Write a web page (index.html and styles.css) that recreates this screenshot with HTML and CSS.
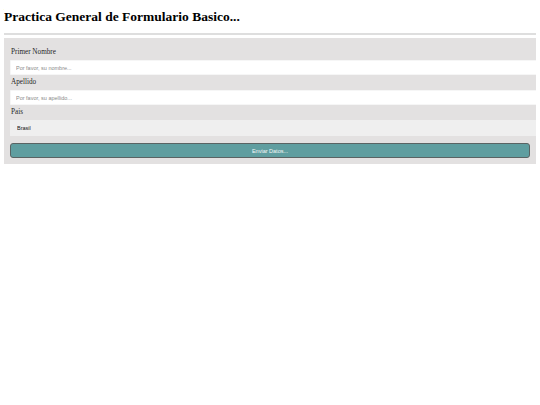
FILE: index.html
```html
<!DOCTYPE html>
<html lang="es">
<head>
<meta charset="utf-8">
<title>Practica General de Formulario Basico</title>
<link rel="stylesheet" href="styles.css">
</head>
<body>
  <h1 class="title">Practica General de Formulario Basico...</h1>
  <hr class="divider">
  <form class="form">
    <label class="form-label" for="nombre">Primer Nombre</label>
    <input class="form-input" type="text" id="nombre" placeholder="Por favor, su nombre...">
    <label class="form-label" for="apellido">Apellido</label>
    <input class="form-input" type="text" id="apellido" placeholder="Por favor, su apellido...">
    <label class="form-label" for="pais">Pais</label>
    <select class="form-select" id="pais">
      <option>Brasil</option>
      <option>Argentina</option>
      <option>Chile</option>
    </select>
    <button class="form-button" type="button">Enviar Datos...</button>
  </form>
</body>
</html>
```
FILE: styles.css
```css
html {
  overflow-x: hidden;
}

body {
  margin: 4px;
  background: #ffffff;
  font-family: "Liberation Serif", "Times New Roman", serif;
  color: #000000;
}

.title {
  margin: 5px 0 0;
  font-size: 13.5px;
  line-height: 16px;
  font-weight: bold;
}

.divider {
  margin: 8px 0 3px;
  height: 2px;
  border: 0;
  background: #dedede;
}

.form {
  display: flex;
  flex-direction: column;
  padding: 7px 6px 6px;
  background: #e3e1e1;
}

.form-label {
  display: block;
  padding-left: 1px;
  font-size: 7.2px;
  font-weight: normal;
  line-height: 15px;
  color: #262626;
}

.form-input,
.form-select {
  box-sizing: border-box;
  width: calc(100% + 10px);
  height: 15px;
  margin: 0;
  padding: 0 6px;
  border: 0;
  border-radius: 0;
  outline: none;
  font-family: "Liberation Sans", Arial, sans-serif;
  font-size: 5.5px;
}

.form-input {
  background: #ffffff;
  box-shadow: inset 0 0 0 0.5px #eeeeee;
}

.form-input::placeholder {
  color: #8a8a8a;
}

.form-select {
  -webkit-appearance: none;
  appearance: none;
  height: 16px;
  padding-left: 7px;
  background: #efefef;
  color: #111111;
}

.form-button {
  box-sizing: border-box;
  height: 15px;
  margin-top: 7px;
  padding: 0;
  border: 1px solid #5a6464;
  border-radius: 3px;
  background: #5f9ea0;
  color: #f4f8f8;
  font-family: "Liberation Sans", Arial, sans-serif;
  font-size: 5.5px;
}
```
